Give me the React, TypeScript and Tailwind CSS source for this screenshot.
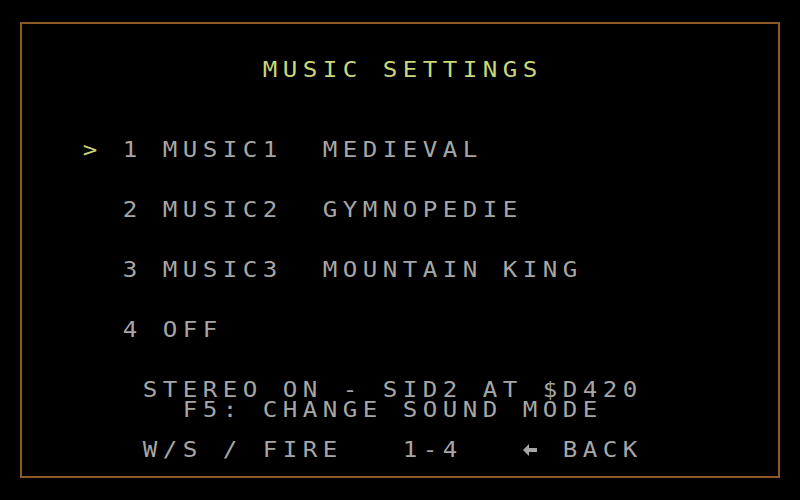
import React from "react";

type Line = { text: string; tone?: "title" | "text"; marks?: number[] };

// 40 x 25 character screen, 20px cells; "<" in a line stands for the back-arrow glyph
const rows: (Line | null)[] = [
  null,
  null,
  null,
  { text: "             MUSIC SETTINGS", tone: "title" },
  null,
  null,
  null,
  { text: "    > 1 MUSIC1  MEDIEVAL", marks: [4] },
  null,
  null,
  { text: "      2 MUSIC2  GYMNOPEDIE" },
  null,
  null,
  { text: "      3 MUSIC3  MOUNTAIN KING" },
  null,
  null,
  { text: "      4 OFF" },
  null,
  null,
  { text: "       STEREO ON - SID2 AT $D420" },
  { text: "         F5: CHANGE SOUND MODE" },
  null,
  { text: "       W/S / FIRE   1-4   < BACK" },
  null,
  null,
];

function BackArrow() {
  return (
    <span className="inline-flex w-[20px] h-[20px] items-center justify-center">
      <svg width="14" height="12" viewBox="0 0 14 12" fill="#a6a6a6" aria-label="←">
        <path d="M0 6 L6 0 L6 4 L14 4 L14 8 L6 8 L6 12 Z" />
      </svg>
    </span>
  );
}

function Cell({ ch, accent }: { ch: string; accent: boolean }) {
  if (ch === "<") return <BackArrow />;
  return (
    <span
      className={`inline-block w-[20px] h-[20px] text-center leading-[20px] scale-x-[1.15] ${
        accent ? "text-[#c9d67a]" : ""
      }`}
    >
      {ch === " " ? "\u00a0" : ch}
    </span>
  );
}

export default function App() {
  return (
    <div className="w-[800px] h-[500px] bg-black pt-[22px] px-[20px] overflow-hidden">
      <div className="h-[456px] border-2 border-[#8d5a26] overflow-visible">
        <div
          className="-ml-[22px] -mt-[24px] w-[800px] flex flex-col text-[21px] text-[#a6a6a6]"
          style={{ fontFamily: '"DejaVu Sans Mono", "Liberation Mono", monospace' }}
        >
          {rows.map((row, r) => (
            <div key={r} className="h-[20px] flex">
              {row &&
                Array.from(row.text).map((ch, c) => (
                  <Cell
                    key={c}
                    ch={ch}
                    accent={row.tone === "title" || (row.marks ?? []).includes(c)}
                  />
                ))}
            </div>
          ))}
        </div>
      </div>
    </div>
  );
}
